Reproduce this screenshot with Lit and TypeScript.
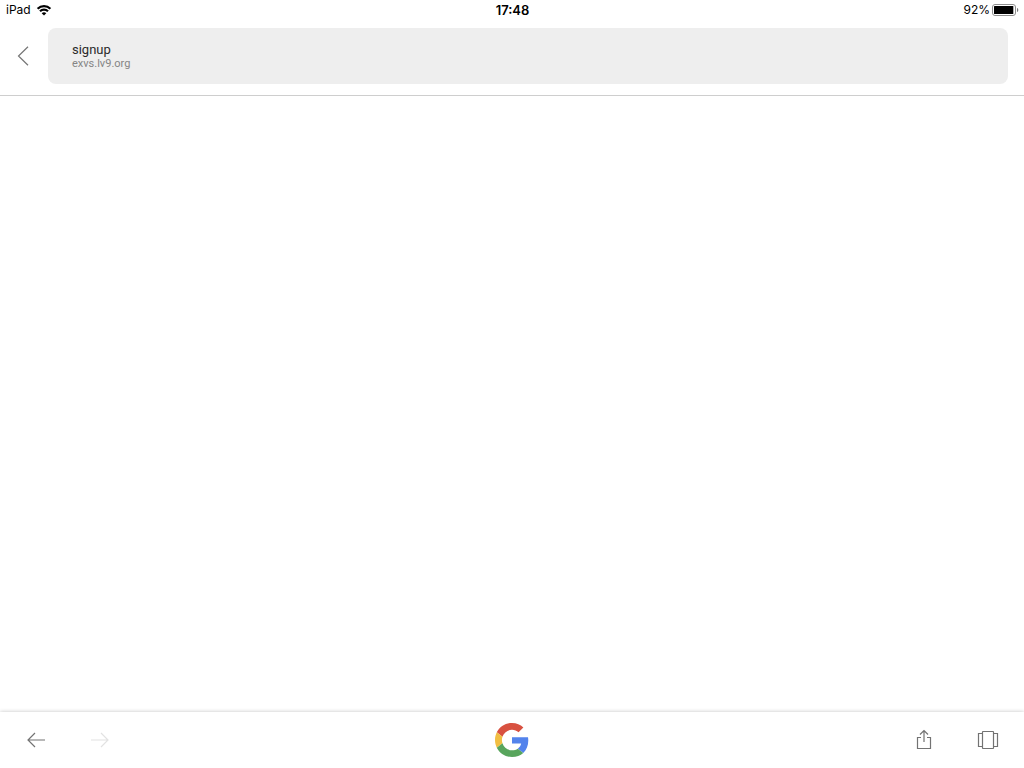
import { LitElement, html, css } from "lit";
import { customElement, property } from "lit/decorators.js";

@customElement("status-bar")
class StatusBar extends LitElement {
  @property() device = "";
  @property() time = "";
  @property({ type: Number }) battery = 0;

  static styles = css`
    :host {
      display: grid;
      grid-template-columns: 1fr auto 1fr;
      align-items: center;
      height: 20px;
      padding: 0 5px 0 6px;
      font: 12px/20px Inter, "Liberation Sans", sans-serif;
      color: #000;
    }
    .left,
    .right {
      display: flex;
      align-items: center;
    }
    .left {
      gap: 5px;
    }
    .right {
      justify-content: flex-end;
      gap: 2px;
    }
    .time {
      font-weight: 600;
      font-size: 13px;
    }
    svg {
      display: block;
    }
  `;

  render() {
    return html`
      <div class="left">
        <span>${this.device}</span>
        <svg width="16" height="12" viewBox="0 0 16 12" fill="none" stroke="#000" stroke-width="2.2" aria-label="Wi-Fi">
          <path d="M1.6 4.7C5.2 1.2 10.8 1.2 14.4 4.7" />
          <path d="M4 7.3C6.2 5.1 9.8 5.1 12 7.3" />
          <path d="M8 11.5L5.7 9.2C7 8 9 8 10.3 9.2Z" fill="#000" stroke="none" />
        </svg>
      </div>
      <span class="time">${this.time}</span>
      <div class="right">
        <span>${this.battery}%</span>
        <svg width="27" height="12" viewBox="0 0 27 12" aria-label="Battery">
          <rect x="0.5" y="0.5" width="23" height="11" rx="2.5" fill="#fff" stroke="#8e8e8e" />
          <rect x="2" y="2" width=${(this.battery / 100) * 21} height="8" rx="0.5" fill="#000" />
          <path d="M25 4C26.7 4.5 26.7 7.5 25 8Z" fill="#777" />
        </svg>
      </div>
    `;
  }
}

@customElement("address-bar")
class AddressBar extends LitElement {
  @property() heading = "";
  @property() host = "";

  static styles = css`
    :host {
      display: flex;
      padding: 8px 16px 11px 0;
      border-bottom: 1px solid #cecece;
      font-family: Roboto, "Liberation Sans", sans-serif;
    }
    button {
      border: 0;
      margin: 0;
      padding: 0;
      background: none;
      font-family: inherit;
    }
    .close {
      flex: none;
      display: grid;
      place-items: center;
      width: 48px;
    }
    .address {
      flex: 1;
      height: 56px;
      padding: 0 24px;
      border-radius: 8px;
      background: #eee;
      text-align: left;
    }
    .heading,
    .host {
      display: block;
    }
    .heading {
      font-size: 13px;
      line-height: 15px;
      color: #2b2b2b;
    }
    .host {
      font-size: 11px;
      line-height: 14px;
      color: #858585;
    }
  `;

  render() {
    return html`
      <button class="close" aria-label="Close">
        <svg width="24" height="24" viewBox="0 0 24 24" fill="none" stroke="#757575" stroke-width="1.2">
          <path d="M16 2.7L6.5 12L16 21.3" />
        </svg>
      </button>
      <button class="address">
        <span class="heading">${this.heading}</span>
        <span class="host">${this.host}</span>
      </button>
    `;
  }
}

@customElement("tool-bar")
class ToolBar extends LitElement {
  static styles = css`
    :host {
      display: grid;
      grid-template-columns: 1fr auto 1fr;
      height: 56px;
      padding: 0 4px;
      background: #fff;
      box-shadow: 0 0 4px rgba(0, 0, 0, 0.24);
    }
    .group {
      display: flex;
    }
    .end {
      justify-content: flex-end;
    }
    button {
      display: grid;
      place-items: center;
      width: 64px;
      margin: 0;
      padding: 0;
      border: 0;
      background: none;
      color: #737373;
    }
    button:disabled {
      color: #e2e2e2;
    }
    .icon {
      fill: none;
      stroke: currentColor;
      stroke-width: 1.2;
    }
  `;

  render() {
    return html`
      <div class="group">
        <button aria-label="Back">
          <svg class="icon" width="24" height="24" viewBox="0 0 24 24">
            <path d="M21 12H4M11 5L4 12L11 19" />
          </svg>
        </button>
        <button aria-label="Forward" disabled>
          <svg class="icon" width="24" height="24" viewBox="0 0 24 24">
            <path d="M3 12H20M13 5L20 12L13 19" />
          </svg>
        </button>
      </div>
      <button aria-label="Google home">
        <svg width="34" height="34" viewBox="0 0 48 48">
          <path fill="#d85140" d="M24 9.5c3.54 0 6.71 1.22 9.21 3.6l6.85-6.85C35.9 2.38 30.47 0 24 0 14.62 0 6.51 5.38 2.56 13.22l7.98 6.19C12.43 13.72 17.74 9.5 24 9.5z" />
          <path fill="#5383ec" d="M46.98 24.55c0-1.57-.15-3.09-.38-4.55H24v9.02h12.94c-.58 2.96-2.26 5.48-4.78 7.18l7.73 6c4.51-4.18 7.09-10.36 7.09-17.65z" />
          <path fill="#f1be42" d="M10.53 28.59c-.48-1.45-.76-2.99-.76-4.59s.27-3.14.76-4.59l-7.98-6.19C.92 16.46 0 20.12 0 24c0 3.88.92 7.54 2.56 10.78l7.97-6.19z" />
          <path fill="#58a55c" d="M24 48c6.48 0 11.93-2.13 15.89-5.81l-7.73-6c-2.15 1.45-4.92 2.3-8.16 2.3-6.26 0-11.57-4.22-13.47-9.91l-7.98 6.19C6.51 42.62 14.62 48 24 48z" />
        </svg>
      </button>
      <div class="group end">
        <button aria-label="Share">
          <svg class="icon" width="24" height="24" viewBox="0 0 24 24">
            <path d="M9 9.5H5.5V20.5H18.5V9.5H15" />
            <path d="M12 14V2.5M8 6.5L12 2.5L16 6.5" />
          </svg>
        </button>
        <button aria-label="Tabs">
          <svg class="icon" width="24" height="24" viewBox="0 0 24 24">
            <rect x="6.5" y="3.5" width="11" height="17" rx="0.5" />
            <path d="M6.5 5.5H2.5V18.5H6.5M17.5 5.5H21.5V18.5H17.5" />
          </svg>
        </button>
      </div>
    `;
  }
}

@customElement("app-root")
class AppRoot extends LitElement {
  static styles = css`
    :host {
      display: flex;
      flex-direction: column;
      min-height: 100vh;
      background: #fff;
    }
    .page {
      flex: 1;
    }
  `;

  render() {
    return html`
      <status-bar device="iPad" time="17:48" battery="92"></status-bar>
      <address-bar heading="signup" host="exvs.lv9.org"></address-bar>
      <main class="page"></main>
      <tool-bar></tool-bar>
    `;
  }
}
